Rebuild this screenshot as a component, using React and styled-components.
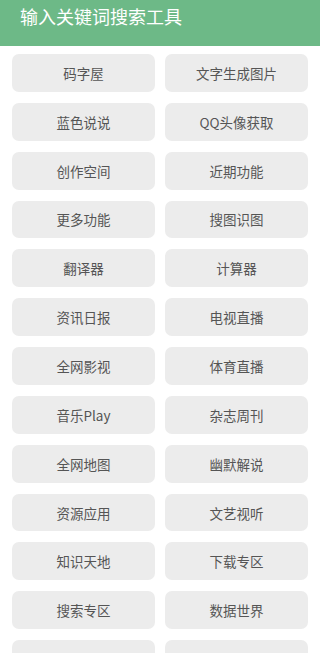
import React from "react";
import styled, { createGlobalStyle } from "styled-components";

const Global = createGlobalStyle`
  html, body { margin: 0; padding: 0; background: #ffffff; }
  body { font-family: "Noto Sans CJK SC", "Noto Sans", sans-serif; }
`;

const Page = styled.div`
  width: 320px;
  height: 653px;
  overflow: hidden;
  background: #ffffff;
`;

const Header = styled.header`
  height: 46px;
  background: #6db987;
  display: flex;
  align-items: flex-start;
  padding: 4px 20px 0;
  box-sizing: border-box;
`;

const Title = styled.h1`
  margin: 0;
  font-size: 18px;
  line-height: 24px;
  font-weight: 400;
  color: #ffffff;
`;

const Grid = styled.div`
  display: grid;
  grid-template-columns: 143px 143px;
  column-gap: 10px;
  row-gap: 11px;
  grid-auto-rows: 37.85px;
  padding: 8px 12px 0;
`;

const Tile = styled.button`
  height: 100%;
  border: none;
  border-radius: 7px;
  background: #ececec;
  color: #555555;
  font-family: "Noto Sans CJK SC", "Noto Sans", sans-serif;
  font-size: 13.5px;
  padding: 0;
  display: flex;
  align-items: center;
  justify-content: center;
`;

const items = [
  "码字屋", "文字生成图片",
  "蓝色说说", "QQ头像获取",
  "创作空间", "近期功能",
  "更多功能", "搜图识图",
  "翻译器", "计算器",
  "资讯日报", "电视直播",
  "全网影视", "体育直播",
  "音乐Play", "杂志周刊",
  "全网地图", "幽默解说",
  "资源应用", "文艺视听",
  "知识天地", "下载专区",
  "搜索专区", "数据世界",
  "", "",
];

export default function App() {
  return (
    <Page>
      <Global />
      <Header>
        <Title>输入关键词搜索工具</Title>
      </Header>
      <Grid>
        {items.map((t, i) => (
          <Tile key={i}>{t}</Tile>
        ))}
      </Grid>
    </Page>
  );
}
